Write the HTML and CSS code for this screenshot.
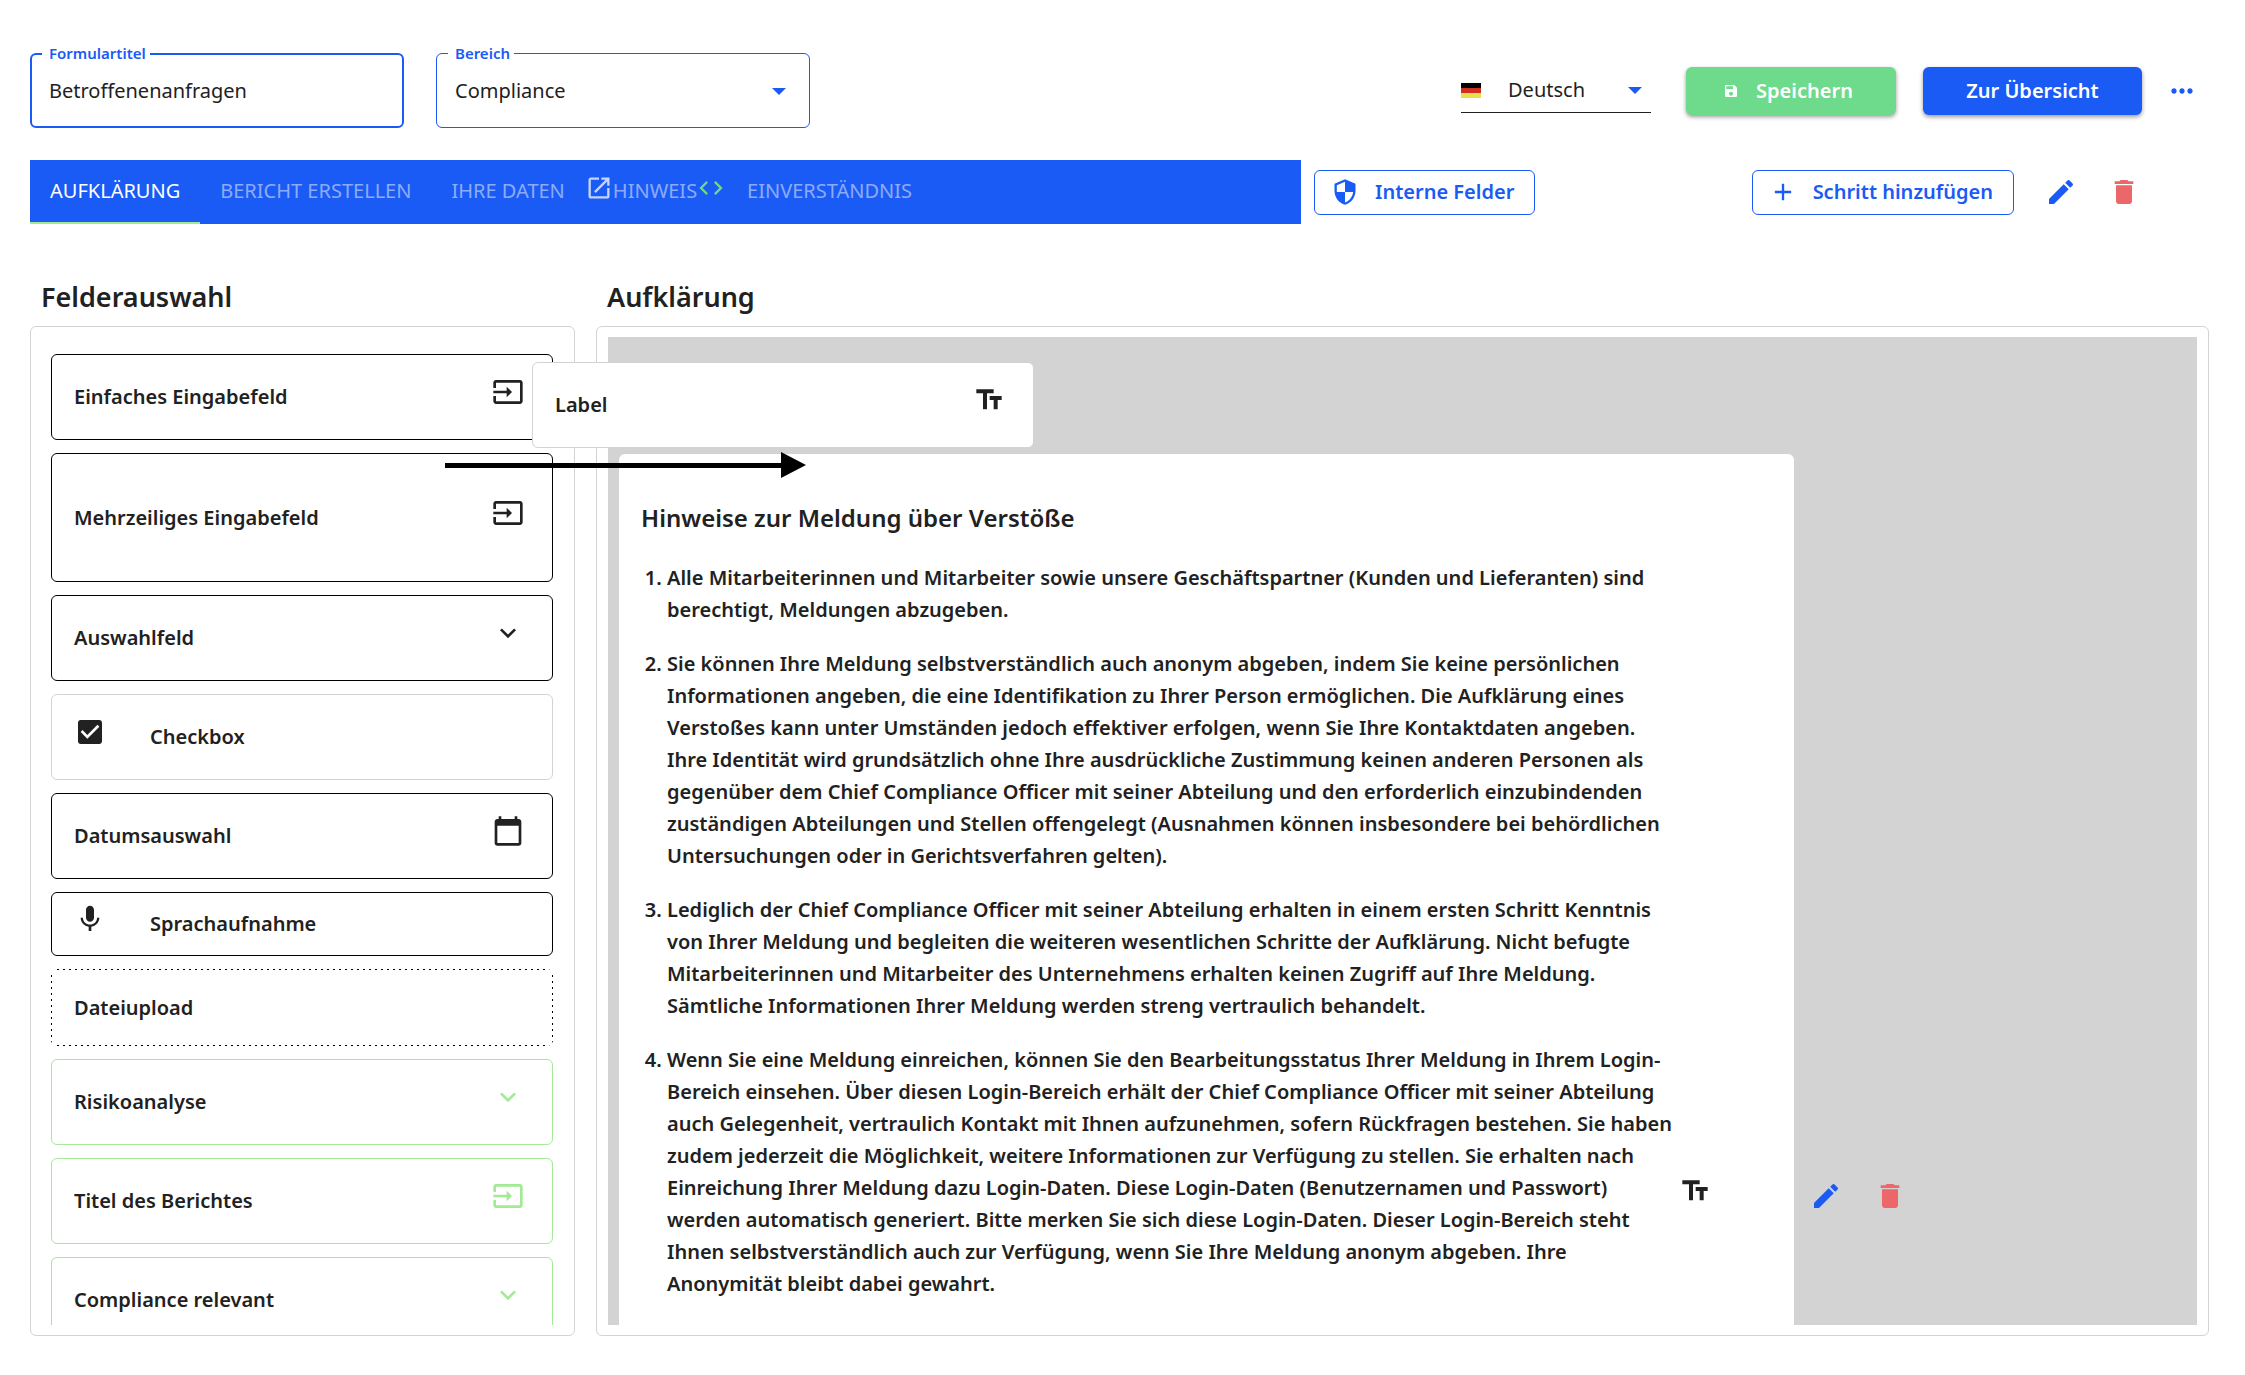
FILE: index.html
```html
<!DOCTYPE html>
<html lang="de">
<head>
<meta charset="utf-8">
<meta name="viewport" content="width=device-width, initial-scale=1">
<title>Formular bearbeiten</title>
<link rel="stylesheet" href="styles.css">
</head>
<body>
<svg class="sprite" aria-hidden="true">
  <symbol id="i-input" viewBox="0 0 24 24"><path d="M21 3.01H3c-1.100 0-2 .9-2 2V9h2V4.990h18v14.030H3V15H1v4.010c0 1.100.9 1.980 2 1.980h18c1.100 0 2-.88 2-1.980v-14c0-1.110-.9-2-2-2zM11 16l4-4-4-4v3H1v2h10v3z"/></symbol>
  <symbol id="i-chevron" viewBox="0 0 24 24"><path d="M16.590 8.590 12 13.170 7.410 8.590 6 10l6 6 6-6z"/></symbol>
  <symbol id="i-check" viewBox="0 0 24 24"><path d="M19 3H5c-1.110 0-2 .9-2 2v14c0 1.100.89 2 2 2h14c1.110 0 2-.9 2-2V5c0-1.100-.89-2-2-2zm-9 14-5-5 1.410-1.410L10 14.170l7.590-7.590L19 8l-9 9z"/></symbol>
  <symbol id="i-calendar" viewBox="0 0 24 24"><path d="M20 3h-1V1h-2v2H7V1H5v2H4c-1.100 0-2 .9-2 2v16c0 1.100.9 2 2 2h16c1.100 0 2-.9 2-2V5c0-1.100-.9-2-2-2zm0 18H4V8h16v13z"/></symbol>
  <symbol id="i-mic" viewBox="0 0 24 24"><path d="M12 14c1.660 0 2.990-1.340 2.990-3L15 5c0-1.660-1.340-3-3-3S9 3.340 9 5v6c0 1.660 1.340 3 3 3zm5.300-3c0 3-2.540 5.100-5.300 5.100S6.700 14 6.700 11H5c0 3.410 2.720 6.230 6 6.720V21h2v-3.280c3.280-.48 6-3.300 6-6.720h-1.700z"/></symbol>
  <symbol id="i-text" viewBox="0 0 24 24"><path d="M2.500 4v3h5v12h3V7h5V4h-13zm19 5h-9v3h3v7h3v-7h3V9z"/></symbol>
  <symbol id="i-edit" viewBox="0 0 24 24"><path d="M3 17.250V21h3.750L17.810 9.940l-3.750-3.750L3 17.250zM20.710 7.040c.39-.39.39-1.020 0-1.410l-2.340-2.340c-.39-.39-1.020-.39-1.410 0l-1.830 1.830 3.750 3.750 1.830-1.830z"/></symbol>
  <symbol id="i-trash" viewBox="0 0 24 24"><path d="M6 19c0 1.100.9 2 2 2h8c1.100 0 2-.9 2-2V7H6v12zM19 4h-3.500l-1-1h-5l-1 1H5v2h14V4z"/></symbol>
  <symbol id="i-shield" viewBox="0 0 24 24"><path d="M12 1 3 5v6c0 5.550 3.840 10.740 9 12 5.160-1.260 9-6.450 9-12V5l-9-4zm0 10.990h7c-.53 4.120-3.280 7.790-7 8.940V12H5V6.300l7-3.110v8.800z"/></symbol>
  <symbol id="i-plus" viewBox="0 0 24 24"><path d="M19 13h-6v6h-2v-6H5v-2h6V5h2v6h6v2z"/></symbol>
  <symbol id="i-save" viewBox="0 0 24 24"><path d="M17 3H5c-1.110 0-2 .9-2 2v14c0 1.100.89 2 2 2h14c1.100 0 2-.9 2-2V7l-4-4zm-5 16c-1.660 0-3-1.340-3-3s1.340-3 3-3 3 1.340 3 3-1.340 3-3 3zm3-10H5V5h10v4z"/></symbol>
  <symbol id="i-more" viewBox="0 0 24 24"><path d="M6 10c-1.100 0-2 .9-2 2s.9 2 2 2 2-.9 2-2-.9-2-2-2zm12 0c-1.100 0-2 .9-2 2s.9 2 2 2 2-.9 2-2-.9-2-2-2zm-6 0c-1.100 0-2 .9-2 2s.9 2 2 2 2-.9 2-2-.9-2-2-2z"/></symbol>
  <symbol id="i-open" viewBox="0 0 24 24"><path d="M19 19H5V5h7V3H5c-1.110 0-2 .9-2 2v14c0 1.100.89 2 2 2h14c1.100 0 2-.9 2-2v-7h-2v7zM14 3v2h3.590l-9.830 9.830 1.410 1.410L19 6.410V10h2V3h-7z"/></symbol>
  <symbol id="i-code" viewBox="0 0 24 24"><path d="M9.400 16.600 4.800 12l4.600-4.600L8 6l-6 6 6 6 1.400-1.400zm5.200 0 4.600-4.600-4.600-4.600L16 6l6 6-6 6-1.400-1.400z"/></symbol>
</svg>

<header class="topbar">
  <div class="field field-focus">
    <label for="title">Formulartitel</label>
    <input id="title" type="text" value="Betroffenenanfragen">
  </div>
  <div class="field">
    <label for="area">Bereich</label>
    <select id="area"><option>Compliance</option></select>
    <span class="caret"></span>
  </div>
  <div class="actions">
    <div class="language">
      <span class="flag"><i></i><i></i><i></i></span>
      <select aria-label="Sprache"><option>Deutsch</option></select>
      <span class="caret"></span>
    </div>
    <button class="btn btn-save" type="button"><svg class="icon-small"><use href="#i-save"/></svg>Speichern</button>
    <button class="btn btn-primary" type="button">Zur Übersicht</button>
    <button class="icon-btn blue" type="button" aria-label="Mehr"><svg class="icon"><use href="#i-more"/></svg></button>
  </div>
</header>

<div class="steps">
  <nav class="tabs">
    <a class="tab active" href="#aufklaerung">AUFKLÄRUNG</a>
    <a class="tab" href="#bericht">BERICHT ERSTELLEN</a>
    <a class="tab" href="#daten">IHRE DATEN</a>
    <a class="tab tab-icons" href="#hinweis"><svg class="icon-tab"><use href="#i-open"/></svg>HINWEIS<svg class="icon-tab code"><use href="#i-code"/></svg></a>
    <a class="tab" href="#einverstaendnis">EINVERSTÄNDNIS</a>
  </nav>
  <div class="tools">
    <button class="btn btn-outline" type="button"><svg class="icon-button"><use href="#i-shield"/></svg>Interne Felder</button>
    <button class="btn btn-outline push" type="button"><svg class="icon-button"><use href="#i-plus"/></svg>Schritt hinzufügen</button>
    <button class="icon-btn blue" type="button" aria-label="Schritt bearbeiten"><svg class="icon"><use href="#i-edit"/></svg></button>
    <button class="icon-btn red" type="button" aria-label="Schritt löschen"><svg class="icon"><use href="#i-trash"/></svg></button>
  </div>
</div>

<main class="workspace">
  <section class="column">
    <h2>Felderauswahl</h2>
    <div class="panel">
      <ul class="palette">
        <li class="tile">Einfaches Eingabefeld<svg class="icon"><use href="#i-input"/></svg></li>
        <li class="tile tall">Mehrzeiliges Eingabefeld<svg class="icon"><use href="#i-input"/></svg></li>
        <li class="tile">Auswahlfeld<svg class="icon"><use href="#i-chevron"/></svg></li>
        <li class="tile lead light"><svg class="icon"><use href="#i-check"/></svg>Checkbox</li>
        <li class="tile">Datumsauswahl<svg class="icon"><use href="#i-calendar"/></svg></li>
        <li class="tile lead short"><svg class="icon"><use href="#i-mic"/></svg>Sprachaufnahme</li>
        <li class="tile upload">Dateiupload</li>
        <li class="tile green">Risikoanalyse<svg class="icon"><use href="#i-chevron"/></svg></li>
        <li class="tile green">Titel des Berichtes<svg class="icon"><use href="#i-input"/></svg></li>
        <li class="tile green">Compliance relevant<svg class="icon"><use href="#i-chevron"/></svg></li>
      </ul>
    </div>
  </section>

  <section class="column">
    <h2>Aufklärung</h2>
    <div class="panel">
      <div class="canvas">
        <div class="entry">
          <article class="block">
            <div class="copy">
              <h3>Hinweise zur Meldung über Verstöße</h3>
              <ol>
                <li>Alle Mitarbeiterinnen und Mitarbeiter sowie unsere Geschäftspartner (Kunden und Lieferanten) sind<br>berechtigt, Meldungen abzugeben.</li>
                <li>Sie können Ihre Meldung selbstverständlich auch anonym abgeben, indem Sie keine persönlichen<br>Informationen angeben, die eine Identifikation zu Ihrer Person ermöglichen. Die Aufklärung eines<br>Verstoßes kann unter Umständen jedoch effektiver erfolgen, wenn Sie Ihre Kontaktdaten angeben.<br>Ihre Identität wird grundsätzlich ohne Ihre ausdrückliche Zustimmung keinen anderen Personen als<br>gegenüber dem Chief Compliance Officer mit seiner Abteilung und den erforderlich einzubindenden<br>zuständigen Abteilungen und Stellen offengelegt (Ausnahmen können insbesondere bei behördlichen<br>Untersuchungen oder in Gerichtsverfahren gelten).</li>
                <li>Lediglich der Chief Compliance Officer mit seiner Abteilung erhalten in einem ersten Schritt Kenntnis<br>von Ihrer Meldung und begleiten die weiteren wesentlichen Schritte der Aufklärung. Nicht befugte<br>Mitarbeiterinnen und Mitarbeiter des Unternehmens erhalten keinen Zugriff auf Ihre Meldung.<br>Sämtliche Informationen Ihrer Meldung werden streng vertraulich behandelt.</li>
                <li>Wenn Sie eine Meldung einreichen, können Sie den Bearbeitungsstatus Ihrer Meldung in Ihrem Login-<br>Bereich einsehen. Über diesen Login-Bereich erhält der Chief Compliance Officer mit seiner Abteilung<br>auch Gelegenheit, vertraulich Kontakt mit Ihnen aufzunehmen, sofern Rückfragen bestehen. Sie haben<br>zudem jederzeit die Möglichkeit, weitere Informationen zur Verfügung zu stellen. Sie erhalten nach<br>Einreichung Ihrer Meldung dazu Login-Daten. Diese Login-Daten (Benutzernamen und Passwort)<br>werden automatisch generiert. Bitte merken Sie sich diese Login-Daten. Dieser Login-Bereich steht<br>Ihnen selbstverständlich auch zur Verfügung, wenn Sie Ihre Meldung anonym abgeben. Ihre<br>Anonymität bleibt dabei gewahrt.</li>
              </ol>
            </div>
            <svg class="icon"><use href="#i-text"/></svg>
          </article>
          <button class="icon-btn blue" type="button" aria-label="Feld bearbeiten"><svg class="icon"><use href="#i-edit"/></svg></button>
          <button class="icon-btn red" type="button" aria-label="Feld löschen"><svg class="icon"><use href="#i-trash"/></svg></button>
        </div>
      </div>
    </div>
  </section>

  <div class="tile light dragged">Label<svg class="icon"><use href="#i-text"/></svg></div>
  <svg class="drag-arrow" viewBox="0 0 361 26" aria-hidden="true"><path d="M0 11h336V0l25 13-25 13V16H0z"/></svg>
</main>
</body>
</html>
```
FILE: styles.css
```css
:root {
  --blue: #1a5af5;
  --green: #6dda8c;
  --lime: #a3ea95;
  --red: #ec676a;
  --grey: #d3d3d3;
  --ink: #212121;
}

* { box-sizing: border-box; }

body {
  margin: 0;
  height: 100vh;
  padding: 53px 36px 39px 30px;
  display: flex;
  flex-direction: column;
  overflow: hidden;
  background: #fff;
  color: var(--ink);
  font: 400 20px/32px "Noto Sans", sans-serif;
}

button, input, select { font: inherit; color: inherit; }
button { cursor: pointer; }

svg { fill: currentColor; flex: none; display: block; }
.sprite { position: absolute; width: 0; height: 0; }
.icon { width: 32px; height: 32px; }
.icon-button { width: 28px; height: 28px; }
.icon-tab { width: 28px; height: 28px; margin-bottom: 6px; }
.icon-small { width: 16px; height: 16px; }

.blue { color: var(--blue); }
.red { color: var(--red); }

.icon-btn {
  flex: none;
  padding: 0;
  border: 0;
  background: none;
}

.caret {
  position: absolute;
  right: 24px;
  top: 50%;
  margin-top: -3px;
  border: 7px solid transparent;
  border-top-color: var(--blue);
  border-bottom: 0;
  pointer-events: none;
}

/* Top bar */
.topbar {
  display: flex;
  align-items: center;
  gap: 32px;
}

.field {
  position: relative;
  width: 374px;
  height: 75px;
}

.field label {
  position: absolute;
  left: 12px;
  top: -12px;
  padding: 0 4px 0 7px;
  background: #fff;
  color: var(--blue);
  font-size: 15px;
  line-height: 24px;
  font-weight: 600;
}

.field input, .field select {
  width: 100%;
  height: 100%;
  padding: 0 18px;
  border: 1px solid var(--blue);
  border-radius: 6px;
  background: none;
  appearance: none;
  outline: none;
}

.field-focus input { border-width: 2px; padding: 0 17px; }

.actions {
  margin-left: auto;
  padding-right: 11px;
  display: flex;
  align-items: center;
}

.language {
  position: relative;
  width: 190px;
  height: 45px;
  margin-right: 35px;
  display: flex;
  align-items: center;
  border-bottom: 1px solid var(--ink);
}

.language .caret { right: 9px; }

.language select {
  flex: 1;
  height: 100%;
  padding: 0 0 0 27px;
  border: 0;
  background: none;
  appearance: none;
  outline: none;
}

.flag { width: 20px; display: grid; grid-template-rows: 5px 5px 5px; }
.flag i:nth-child(1) { background: #000; }
.flag i:nth-child(2) { background: #cf2e22; }
.flag i:nth-child(3) { background: #eddc4b; }

.btn {
  display: flex;
  align-items: center;
  justify-content: center;
  height: 48px;
  padding: 0;
  border: 0;
  border-radius: 6px;
  font-weight: 600;
  white-space: nowrap;
}

.btn-save, .btn-primary {
  color: #fff;
  box-shadow: 0 2px 4px rgba(0, 0, 0, .4);
}

.btn-save {
  width: 210px;
  margin-right: 27px;
  padding-right: 6px;
  gap: 17px;
  background: var(--green);
}

.btn-primary { width: 219px; margin-right: 24px; background: var(--blue); }

/* Step tabs */
.steps {
  margin-top: 32px;
  padding-right: 69px;
  display: flex;
  align-items: center;
  gap: 13px;
}

.tabs {
  flex: 1;
  height: 64px;
  display: flex;
  background: var(--blue);
}

.tab {
  display: flex;
  align-items: center;
  padding: 0 20px;
  border-bottom: 2px solid transparent;
  color: rgba(255, 255, 255, .5);
  text-decoration: none;
  white-space: nowrap;
}

.tab.active { color: #fff; border-bottom-color: var(--lime); }
.tab-icons { padding: 0 2px 0 0; }
.tab-icons .icon-tab { color: rgba(255, 255, 255, .75); }
.tab-icons .code { color: var(--green); }

.tools {
  flex: 0 0 826px;
  display: flex;
  align-items: center;
  gap: 31px;
}

.btn-outline {
  height: 45px;
  padding: 0 20px 0 16px;
  gap: 16px;
  border: 1px solid var(--blue);
  background: #fff;
  color: var(--blue);
}

.push { margin-left: auto; }

/* Workspace */
.workspace {
  position: relative;
  flex: 1;
  min-height: 0;
  margin-top: 55px;
  display: grid;
  grid-template-columns: minmax(0, 545fr) minmax(0, 1613fr);
  grid-template-rows: minmax(0, 1fr);
  gap: 21px;
}

.column { display: flex; flex-direction: column; min-height: 0; }

h2 {
  margin: 0 11px 11px;
  font-size: 27px;
  line-height: 36px;
  font-weight: 600;
}

.panel {
  flex: 1;
  min-height: 0;
  padding: 10px 11px;
  border: 1px solid var(--grey);
  border-radius: 6px;
}

.palette {
  height: 100%;
  margin: 0;
  padding: 17px 10px 0 9px;
  display: flex;
  flex-direction: column;
  gap: 13px;
  overflow: hidden;
  list-style: none;
}

.tile {
  flex: none;
  height: 86px;
  padding: 0 28px 0 22px;
  display: flex;
  align-items: center;
  justify-content: space-between;
  border: 1px solid #000;
  border-radius: 6px;
  background: #fff;
  font-weight: 600;
}

.tile .icon, .block .icon { margin-bottom: 10px; }
.tall { height: 129px; }
.short { height: 64px; }
.lead { justify-content: flex-start; gap: 44px; }
.light { border-color: var(--grey); }
.green { border-color: var(--lime); }
.green .icon { color: var(--lime); }

/* Drop zone outline: 2px dots with 4px between them */
.upload {
  height: 77px;
  border-color: transparent;
  background:
    repeating-linear-gradient(90deg, #000 0 2px, transparent 2px 6px) top / 100% 1px,
    repeating-linear-gradient(90deg, #000 0 2px, transparent 2px 6px) bottom / 100% 1px,
    repeating-linear-gradient(#000 0 2px, transparent 2px 6px) left / 1px 100%,
    repeating-linear-gradient(#000 0 2px, transparent 2px 6px) right / 1px 100%;
  background-origin: border-box;
  background-repeat: no-repeat;
}

.canvas {
  height: 100%;
  padding: 117px 11px 0;
  overflow: hidden;
  background: var(--grey);
}

.entry { display: flex; align-items: center; gap: 32px; }

.block {
  flex: 0 0 75%;
  min-height: 1484px;
  margin-right: -16px;
  padding: 0 83px 0 22px;
  display: flex;
  align-items: center;
  border-radius: 6px;
  background: #fff;
  font-weight: 600;
}

.copy { flex: 1; align-self: flex-start; padding-top: 48px; }

h3 { margin: 0 0 28px; font-size: 24px; line-height: 32px; font-weight: 600; }

ol {
  margin: 0;
  padding-left: 26px;
  display: grid;
  gap: 22px;
}

/* Tile being dragged onto the canvas */
.dragged {
  position: absolute;
  left: 502px;
  top: 83px;
  width: 502px;
}

.drag-arrow {
  position: absolute;
  left: 415px;
  top: 173px;
  width: 361px;
  height: 26px;
  color: #000;
}
```
